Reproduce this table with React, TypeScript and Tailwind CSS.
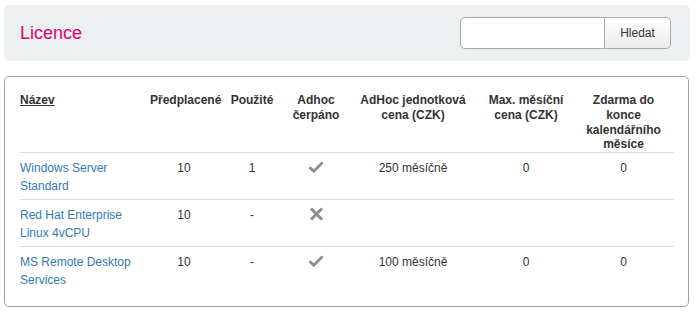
import React from "react";

type Row = {
  name: string[];
  prepaid: string;
  used: string;
  adhoc: boolean;
  unit: string;
  max: string;
  free: string;
};

const rows: Row[] = [
  { name: ["Windows Server", "Standard"], prepaid: "10", used: "1", adhoc: true, unit: "250 měsíčně", max: "0", free: "0" },
  { name: ["Red Hat Enterprise", "Linux 4vCPU"], prepaid: "10", used: "-", adhoc: false, unit: "", max: "", free: "" },
  { name: ["MS Remote Desktop", "Services"], prepaid: "10", used: "-", adhoc: true, unit: "100 měsíčně", max: "0", free: "0" },
];

const Check = () => (
  <svg width="16" height="12" viewBox="0 0 16 12" className="mx-auto mt-[2px]">
    <path d="M1.5 6.2 L5.8 10.2 L14.5 1.5" fill="none" stroke="#8c8c8c" strokeWidth="2.8" />
  </svg>
);

const Cross = () => (
  <svg width="15" height="14" viewBox="0 0 15 14" className="mx-auto mt-[1px]">
    <path d="M2 1.5 L13 12.5 M13 1.5 L2 12.5" fill="none" stroke="#8c8c8c" strokeWidth="3" />
  </svg>
);

const App: React.FC = () => {
  return (
    <div className="min-h-[316px] bg-white px-[4px] pt-[5px] font-['Liberation_Sans',Arial,sans-serif] text-[12px] text-[#333]">
      <div className="mr-[1px] flex h-[56px] items-center justify-between rounded-[5px] bg-[#edf0f1] pl-[16px] pr-[19px]">
        <h1 className="text-[18px] text-[#e20074]">Licence</h1>
        <div className="flex h-[32px]">
          <input className="w-[145px] rounded-l-[5px] border border-[#a4a9ad] bg-white outline-none" />
          <button className="w-[66px] rounded-r-[5px] border border-l-0 border-[#a4a9ad] bg-gradient-to-b from-white to-[#ececec] text-[12px] text-[#333]">
            Hledat
          </button>
        </div>
      </div>

      <div className="mr-[2px] mt-[15px] rounded-[5px] border border-[#9aa1a8] px-[15px] pb-[13px] pt-[16px]">
        <table className="w-[655px] table-fixed border-collapse">
          <colgroup>
            <col className="w-[130px]" />
            <col className="w-[68px]" />
            <col className="w-[68px]" />
            <col className="w-[60px]" />
            <col className="w-[134px]" />
            <col className="w-[92px]" />
            <col className="w-[103px]" />
          </colgroup>
          <thead>
            <tr className="align-top text-[12px] font-bold leading-[14.75px]">
              <th className="h-[59px] p-0 text-left">
                <span className="underline">Název</span>
              </th>
              <th className="p-0 text-center">Předplacené</th>
              <th className="p-0 text-center">Použité</th>
              <th className="p-0 text-center">Adhoc<br />čerpáno</th>
              <th className="p-0 text-center">AdHoc jednotková<br />cena (CZK)</th>
              <th className="p-0 text-center">Max. měsíční<br />cena (CZK)</th>
              <th className="p-0 text-center">Zdarma do<br />konce<br />kalendářního<br />měsíce</th>
            </tr>
          </thead>
          <tbody>
            {rows.map((r) => (
              <tr key={r.name[0]} className="border-t border-[#dedede] align-top leading-[18px]">
                <td className="pb-[4px] pt-[6px] text-[#337ab7]">
                  {r.name[0]}
                  <br />
                  {r.name[1]}
                </td>
                <td className="pb-[4px] pt-[6px] text-center">{r.prepaid}</td>
                <td className="pb-[4px] pt-[6px] text-center">{r.used}</td>
                <td className="pb-[4px] pt-[6px] text-center">{r.adhoc ? <Check /> : <Cross />}</td>
                <td className="pb-[4px] pt-[6px] text-center">{r.unit}</td>
                <td className="pb-[4px] pt-[6px] text-center">{r.max}</td>
                <td className="pb-[4px] pt-[6px] text-center">{r.free}</td>
              </tr>
            ))}
          </tbody>
        </table>
      </div>
    </div>
  );
};

export default App;
